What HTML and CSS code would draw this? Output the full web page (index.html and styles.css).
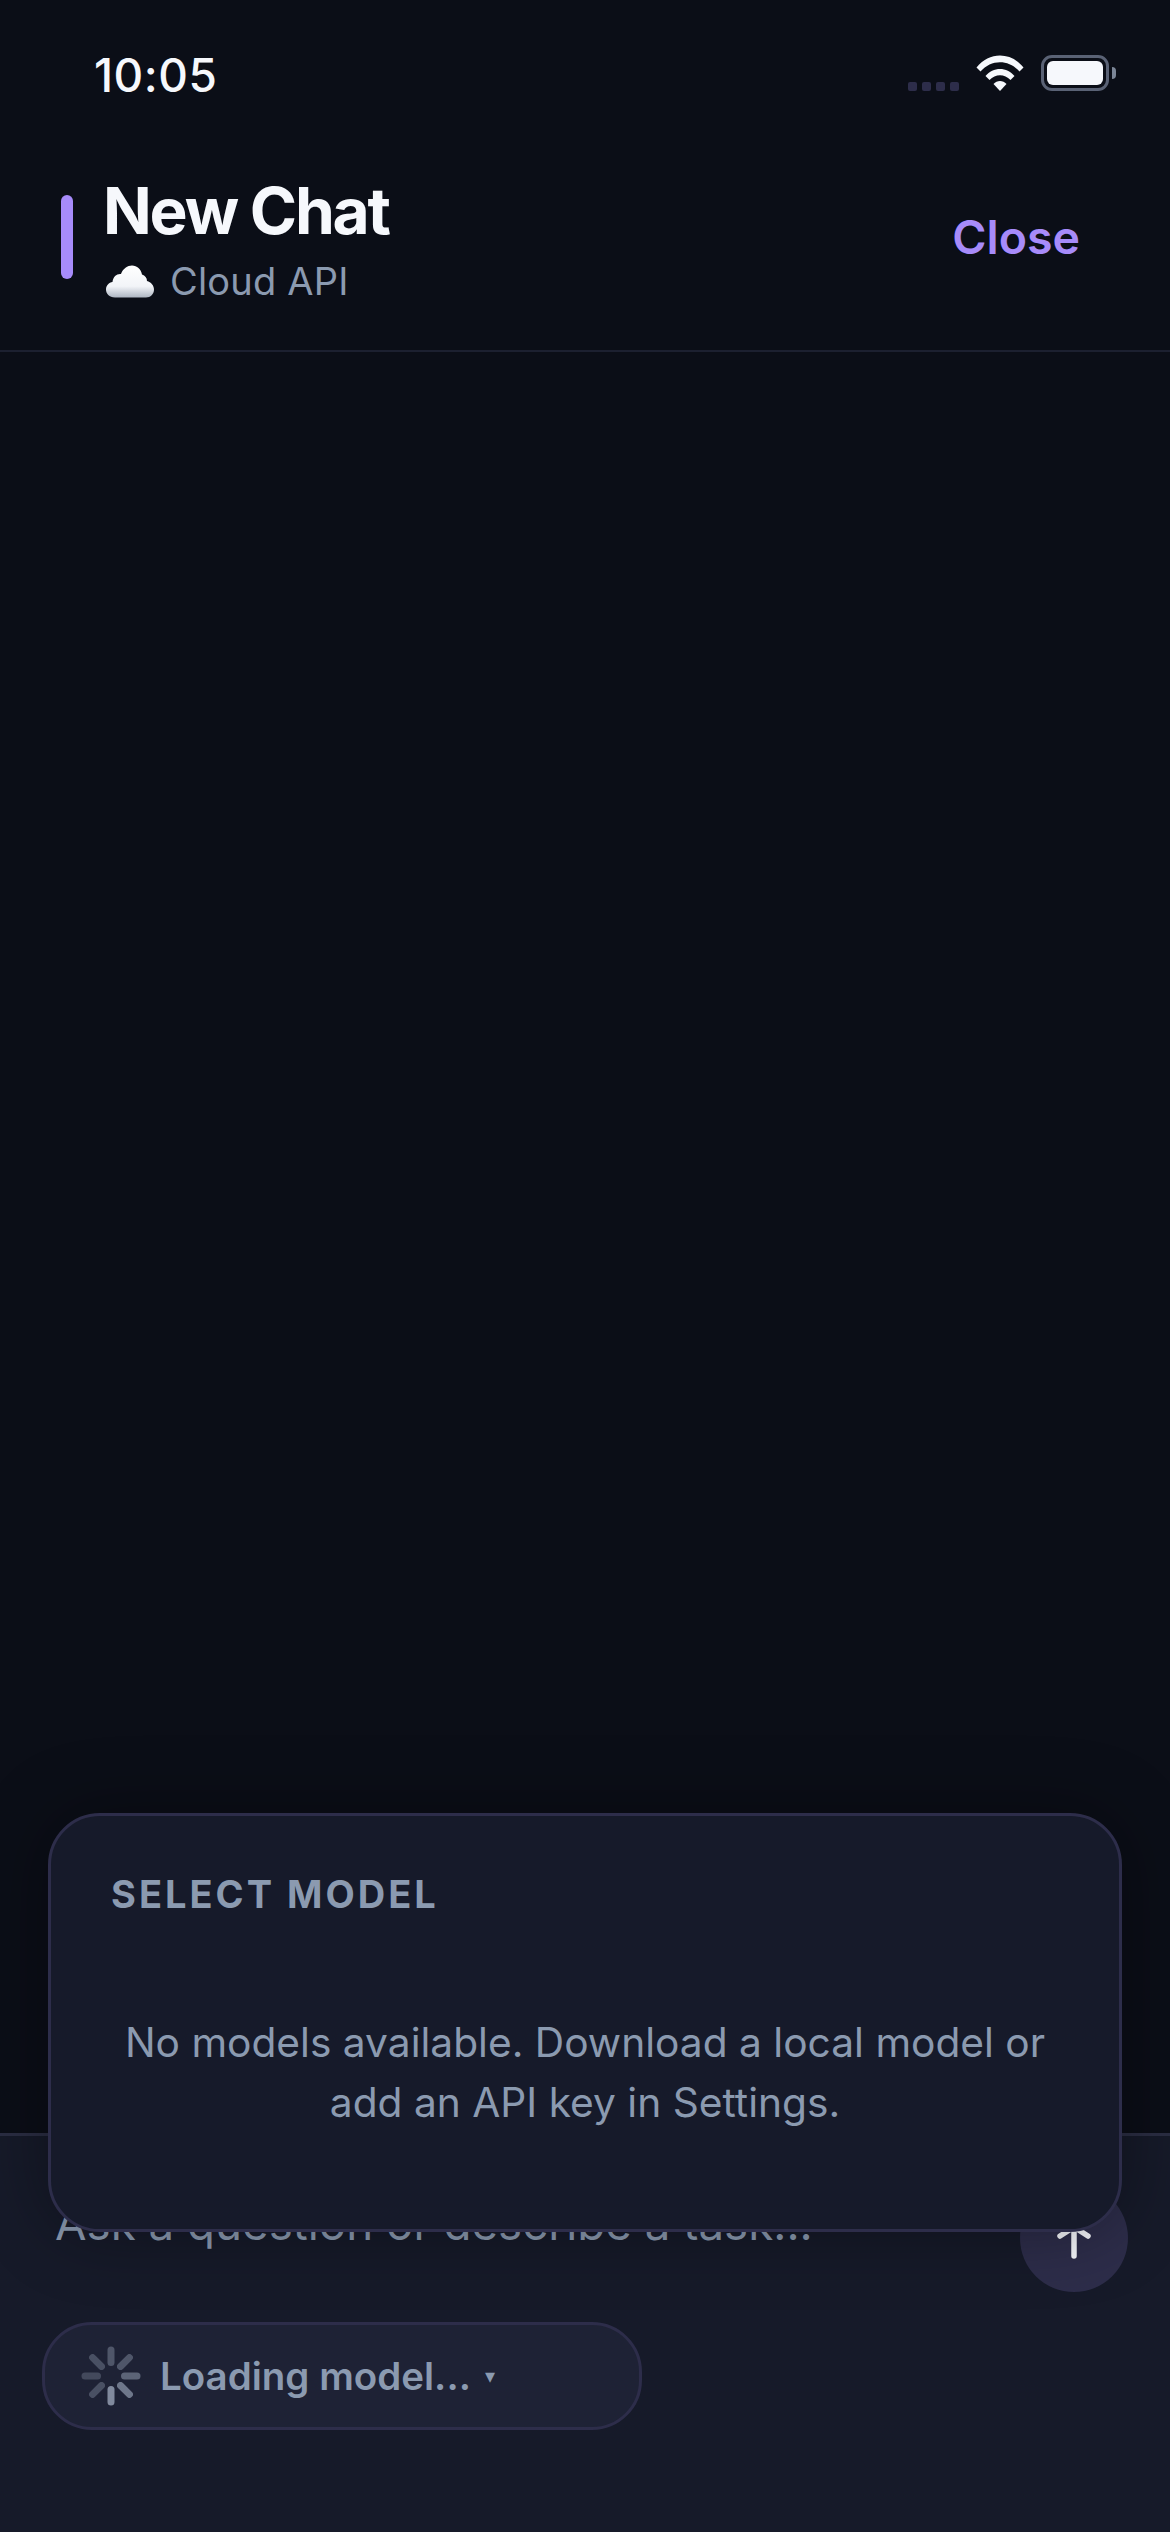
FILE: index.html
```html
<!DOCTYPE html>
<html lang="en">
    <head>
        <meta charset="UTF-8" />
        <meta name="viewport" content="width=device-width, initial-scale=1.0" />
        <title>New Chat</title>
        <link rel="stylesheet" href="styles.css">
    </head>
    <body>
        <div class="screen">
            <div class="status-bar">
                <span class="time">10:05</span>
                <div class="status-icons">
                    <div class="signal">
                        <span class="dot"></span>
                        <span class="dot"></span>
                        <span class="dot"></span>
                        <span class="dot"></span>
                    </div>
                    <svg class="wifi" width="48" height="36" viewBox="0 0 48 36">
                        <path fill="#f6f8fc" d="M0.5 12.5 C13 -3.5 35 -3.5 47.5 12.5 L43.5 16.5 C33 4 15 4 4.5 16.5 Z" />
                        <path fill="#f6f8fc" d="M9.5 21 C17 11.5 31 11.5 38.5 21 L34.5 25 C28.5 18.5 19.500 18.500 13.500 25 Z" />
                        <path fill="#f6f8fc" d="M17.500 29 C21 25 27 25 30.500 29 L24 36 Z" />
                    </svg>
                    <div class="battery">
                        <div class="battery-body"><span class="battery-level"></span></div>
                        <span class="battery-nub"></span>
                    </div>
                </div>
            </div>

            <header class="header">
                <span class="accent"></span>
                <div class="titles">
                    <h1 class="title">New Chat</h1>
                    <div class="subtitle">
                        <svg class="cloud" width="48" height="33" viewBox="0 0 48 33">
                            <defs>
                                <linearGradient id="cloudFill" x1="0" y1="0" x2="0" y2="1">
                                    <stop offset="0" stop-color="#ffffff" />
                                    <stop offset="0.65" stop-color="#f2f4f8" />
                                    <stop offset="1" stop-color="#aeb6c2" />
                                </linearGradient>
                            </defs>
                            <path fill="url(#cloudFill)" d="M9 32.500 C3 32.500 0 28.500 0 24.500 C0 20.500 3 17.500 6.500 17 C7 11.500 11 8.500 15 9 C17 3.500 21.500 0.500 26 0.500 C31 0.500 35 4 36 9.500 C39 10.500 41 13 41 16 C45 17 48 20.500 48 24.500 C48 29 44.500 32.500 40 32.500 Z" />
                        </svg>
                        <span>Cloud API</span>
                    </div>
                </div>
                <a href="javascript:;" class="close">Close</a>
            </header>

            <main class="messages"></main>

            <footer class="composer">
                <div class="input-row">
                    <span class="placeholder">Ask a question or describe a task...</span>
                    <div class="send">
                        <svg width="40" height="60" viewBox="0 0 40 60">
                            <path fill="none" stroke="#f6f8fc" stroke-width="5.500" stroke-linecap="round" stroke-linejoin="round" d="M20 48 V19 M6 28 L20 19 L34 28" />
                        </svg>
                    </div>
                </div>
                <div class="model-pill">
                    <svg class="spinner" width="64" height="64" viewBox="0 0 64 64">
                        <g stroke="#9aa5b8" stroke-width="7" stroke-linecap="round">
                            <line x1="32" y1="6" x2="32" y2="18.500" opacity="0.4" />
                            <line x1="50.400" y1="13.600" x2="41.500" y2="22.500" opacity="0.4" />
                            <line x1="58" y1="32" x2="45.500" y2="32" opacity="0.5" />
                            <line x1="50.400" y1="50.400" x2="41.500" y2="41.500" opacity="0.65" />
                            <line x1="32" y1="58" x2="32" y2="45.500" opacity="0.8" />
                            <line x1="13.600" y1="50.400" x2="22.500" y2="41.500" opacity="0.35" />
                            <line x1="6" y1="32" x2="18.500" y2="32" opacity="0.3" />
                            <line x1="13.600" y1="13.600" x2="22.500" y2="22.500" opacity="0.35" />
                        </g>
                    </svg>
                    <span class="model-name">Loading model...</span>
                    <span class="caret">▾</span>
                </div>
            </footer>

            <div class="model-popup">
                <div class="popup-title">SELECT MODEL</div>
                <p class="popup-empty">No models available. Download a local model or add an API key in Settings.</p>
            </div>
        </div>
    </body>
</html>
```

FILE: styles.css
```css
* {
    box-sizing: border-box;
}

body {
    margin: 0;
    background-color: #0b0e17;
    font-family: Inter, "Liberation Sans", sans-serif;
}

.screen {
    position: relative;
    display: flex;
    flex-direction: column;
    width: 1170px;
    height: 2532px;
    overflow: hidden;
    background-color: #0b0e17;
}

/* status bar */
.status-bar {
    display: flex;
    justify-content: space-between;
    align-items: flex-start;
    height: 162px;
    padding: 50px 54px 0 94px;
}

.time {
    font-size: 46px;
    line-height: 50px;
    font-weight: 500;
    letter-spacing: 0.5px;
    color: #f6f8fc;
}

.status-icons {
    display: flex;
    align-items: flex-end;
    padding-top: 5px;
}

.signal {
    display: flex;
    gap: 5px;
    margin-right: 17px;
}

.dot {
    width: 9px;
    height: 9px;
    border-radius: 2px;
    background-color: #2d2d4a;
}

.wifi {
    display: block;
    margin-right: 17px;
}

.battery {
    display: flex;
    align-items: center;
}

.battery-body {
    width: 68px;
    height: 36px;
    padding: 3px;
    border: 3px solid #5a6275;
    border-radius: 11px;
}

.battery-level {
    display: block;
    width: 100%;
    height: 100%;
    border-radius: 6px;
    background-color: #f6f8fc;
}

.battery-nub {
    width: 4px;
    height: 12px;
    margin-left: 3px;
    border-radius: 0 6px 6px 0;
    background-color: #7b8597;
}

/* header */
.header {
    display: flex;
    align-items: flex-start;
    height: 190px;
    padding: 11px 90px 0 61px;
    border-bottom: 2px solid #1c2030;
}

.accent {
    width: 12px;
    height: 84px;
    margin-top: 22px;
    margin-right: 30px;
    border-radius: 6px;
    background-color: #a78bfa;
}

.titles {
    flex: 1;
}

.title {
    margin: 0;
    font-size: 64px;
    line-height: 76px;
    font-weight: 700;
    letter-spacing: -2.200px;
    color: #f6f8fc;
}

.subtitle {
    display: flex;
    align-items: center;
    gap: 16px;
    margin-top: 9px;
    padding-left: 3px;
    font-size: 38px;
    line-height: 46px;
    letter-spacing: 0.2px;
    color: #8b9ab0;
}

.close {
    margin-top: 36px;
    font-size: 46.500px;
    line-height: 56px;
    font-weight: 600;
    color: #a78bfa;
    text-decoration: none;
}

.messages {
    flex: 1;
}

/* composer */
.composer {
    height: 399px;
    padding: 0 42px;
    border-top: 3px solid #2a2d42;
    background-color: #161a29;
}

.input-row {
    display: flex;
    justify-content: space-between;
    align-items: flex-start;
    height: 186px;
    padding-top: 48px;
}

.placeholder {
    margin-top: 12px;
    margin-left: 13px;
    font-size: 45.700px;
    line-height: 56px;
    color: #8b9ab0;
}

.send {
    display: flex;
    justify-content: center;
    align-items: center;
    width: 108px;
    height: 108px;
    border-radius: 50%;
    background-color: #2d2d4a;
}

.model-pill {
    display: flex;
    align-items: center;
    width: 600px;
    height: 108px;
    padding-left: 34px;
    border: 3px solid #2d2d4a;
    border-radius: 50px;
    background-color: #1e2235;
}

.spinner {
    display: block;
    margin-right: 17px;
}

.model-name {
    font-size: 38.500px;
    font-weight: 600;
    color: #8b9ab0;
}

.caret {
    margin-left: 14px;
    font-size: 20px;
    color: #8b9ab0;
}

/* popup over the composer */
.model-popup {
    position: absolute;
    left: 48px;
    right: 48px;
    bottom: 300px;
    height: 419px;
    padding: 55px 60px 0;
    border: 3px solid #2d2d4a;
    border-radius: 52px;
    background-color: #161a2a;
    box-shadow: 0 0 70px rgba(0, 0, 0, 0.35);
}

.popup-title {
    font-size: 38px;
    line-height: 46px;
    font-weight: 700;
    letter-spacing: 3px;
    color: #8b9ab0;
}

.popup-empty {
    margin: 96px 0 0;
    font-size: 40.700px;
    line-height: 60px;
    text-align: center;
    color: #8b9ab0;
}
```
